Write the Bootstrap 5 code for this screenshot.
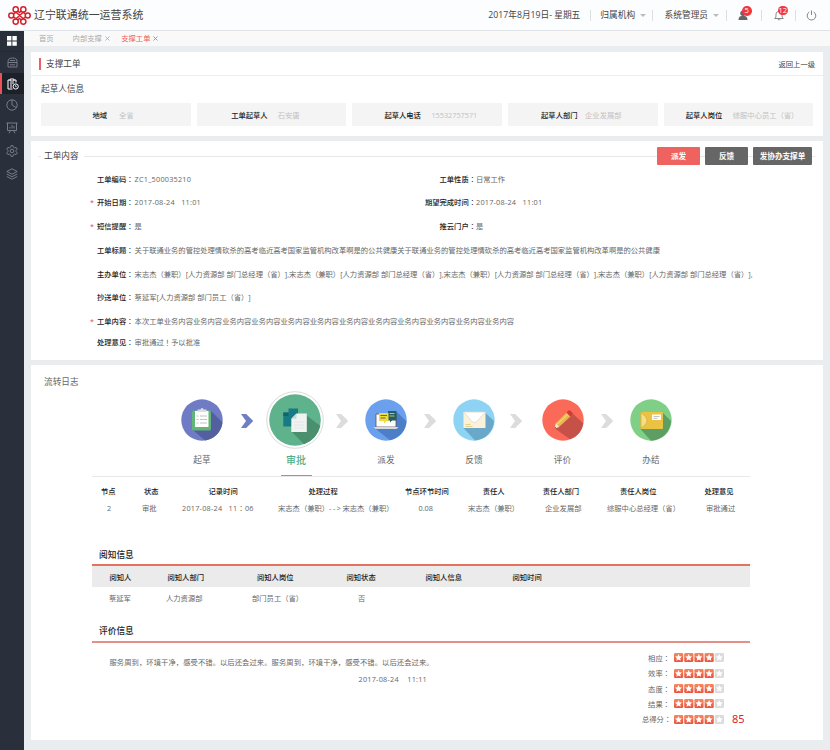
<!DOCTYPE html>
<html>
<head>
<meta charset="utf-8">
<meta name="viewport" content="width=device-width, initial-scale=1">
<title>辽宁联通统一运营系统</title>
<link href="https://cdn.jsdelivr.net/npm/bootstrap@5.3.0/dist/css/bootstrap.min.css" rel="stylesheet">
<style>
body{font-family:"Open Sans","Noto Sans CJK SC",sans-serif;font-size:7.3px;line-height:12px;color:#666;background:#e9edf0;width:830px;height:750px;overflow:hidden;white-space:nowrap;text-spacing-trim:space-all;font-kerning:none}
svg{display:block;flex:none}
.tc{font-family:"Noto Sans CJK TC",sans-serif;font-style:normal;font-weight:400}
.topbar{height:31px;background:#fcfdfe;border-bottom:1px solid #dfe3e8;padding:0 13px 0 8px}
.brand-name{font-size:10.95px;line-height:16px;color:#444;margin:-1px 0 0 3px}
.topbar .item{font-size:8.7px;color:#444}
.topbar .date{margin-right:9.5px}
.topbar .org{margin-left:9.5px}
.topbar .admin{margin-left:11.5px}
.sep{width:1px;height:11px;background:#dcdfe3}
.caret{width:0;height:0;border:3px solid transparent;border-top:3.5px solid #bbb;border-bottom:0;margin:0 6px 0 5px}
.admin + .caret{margin-right:7px}
.users{margin:0 13px 0 11px}
.bell{margin:0 11px 0 12px}
.power{margin-left:10px}
.pip{position:absolute;left:4px;top:-4px;width:9.5px;height:9.5px;border-radius:50%;background:#f0383f;color:#fff;font-size:7.5px;line-height:9.5px;text-align:center}
.side{width:24px;background:#2a303b;height:719px}
.side .cell{height:22.9px}
.side .short{height:21px}
.side .first{height:21px;border-bottom:1px solid #232832}
.side .current{background:#1c2029;border-left:2px solid #ee5058;height:21px;padding-right:1px}
.crumbs{height:15px;background:#f9f9f9;padding-left:15px;color:#aaa}
.crumbs .on{color:#f05a5f;margin-left:11.5px}
.crumbs .second{margin-left:19px}
.crumbs span{margin-top:-1px}
.crumbs svg{margin-left:3px;margin-top:-1px}
.panel{background:#fff;margin:0 7px 5px 7px}
.p1{margin-top:6px;height:84px}.p2{height:219px}.p3{height:375px}
.p1head{height:24px;border-bottom:1px solid #eceff1;padding:0 8px;color:#444}
.bar{width:2px;height:12px;background:#ee5f64;margin-right:5px}
.h{font-size:8.65px;color:#444}
.draft{padding:7px 0 0 10px;height:20px}
.dark{color:#222;font-weight:500}
.boxes{display:grid;grid-template-columns:repeat(5,149.5px);gap:6.2px;padding-left:10px;margin-top:7px}
.box{height:23px;background:#f4f4f4;color:#c2c2c2;display:grid;align-items:center}
.b1{padding-left:51.5px;grid-template-columns:26.5px 1fr}
.b2{padding-left:34.5px;grid-template-columns:46.5px 1fr}
.b3{padding-left:32px;grid-template-columns:47px 1fr}
.b4{padding-left:33px;grid-template-columns:44px 1fr}
.b5{padding-left:22px;grid-template-columns:47px 1fr}
.num{letter-spacing:.22px}
.arrow{letter-spacing:1.5px}
.legend-row{height:18px;margin-top:6px;padding:0 8px 0 7px}
.legend-row .h{margin:0 5px 0 3px}
.rule{height:1px;background:#e8e8e8}
.tick{width:3px}.gapline{width:5px}
.act{height:17.5px;border-radius:1px;border:0;padding:0;font-size:7.6px;line-height:17px;font-weight:700;color:#fff;background:#666;width:43px}
.act.red{background:#ee6260}.act.wide{width:59px}
.fields{display:grid;grid-template-rows:22px 23.5px 24.5px 24px 24px 22.5px 24px 19px;padding:3px 0 0 59px}
.field{display:grid;grid-template-columns:7px 37.6px 290px auto 1fr;align-items:center}
.field .r{width:51.4px;text-align:right}
.star{color:#e0474c;font-size:7px;padding-top:2px}
.title3{padding:11px 0 0 13px;height:22px;color:#666}
.steps{display:grid;grid-template-columns:54px 36px 62px 30px 58px 30px 58px 27px 65px 24px 64px;margin-left:144px;height:89px}
.step{height:89px;display:grid;grid-template-rows:66px 1fr;justify-items:center;align-items:center;font-size:8.65px}
.step .lbl{height:23px;padding-top:1px}
.step.now{color:#4fae87;font-size:10px;font-weight:500}
.step.now svg{margin-left:-3px}
.step.now .lbl{height:23px;width:31px;text-align:center;border-bottom:1.5px solid #5ab791;line-height:15px;padding-top:0}
.chev{margin-top:26.5px;justify-self:center}
.inner{margin-left:61px;width:658px}
.g{display:grid;height:17px;align-items:center}
.t1h{grid-template-columns:43px 64.5px 100px 96.5px 77.7px 60px 77.3px 84.5px 46px;padding-left:9px;margin-top:5px}
.t1v{grid-template-columns:35px 40px 96px 140.5px 49.5px 77px 62px 99px 44px;padding-left:15px}
.t2h{grid-template-columns:58px 89.5px 89.5px 79px 87px 1fr;padding-left:17.5px;background:#ebebeb;height:21px}
.t2v{grid-template-columns:57px 86px 106px 1fr;padding-left:17px;height:22px}
.sub{font-size:8.7px;font-weight:500;color:#222;padding-left:7px}
.sub1{margin-top:33px;height:15px}
.sub2{margin-top:16px;height:16px}
.redline{height:2px;background:#e5715f}
.redline.soft{background:#e58f88}
.remark{padding:12.5px 0 0 17.5px;width:550px}
.remark .line{height:17px;letter-spacing:.07px}
.when{padding-left:249px}
.rate{display:grid;grid-template-rows:15.7px 15.3px 15.2px 15.3px 15.5px;padding-top:7px}
.rrow{display:grid;grid-template-columns:32px 58px 1fr;align-items:center}
.score{font-size:11px;color:#d9252b;font-family:"Noto Sans",sans-serif}
</style>
</head>
<body>
<svg width="0" height="0" class="position-absolute">
<defs>
<linearGradient id="og" x1="0" y1="0" x2="0" y2="1"><stop offset="0" stop-color="#f58a60"/><stop offset="1" stop-color="#e9523f"/></linearGradient>
<path id="st" d="M4.5 1.100l1.100 2.200 2.400.3-1.800 1.700.5 2.400-2.200-1.200-2.200 1.200.5-2.400L1 3.600l2.400-.3z" fill="#fff"/>
<g id="five">
<g id="on1"><rect width="9.2" height="9" rx="1.2" fill="url(#og)"/><use href="#st"/></g>
<use href="#on1" x="10.2"/><use href="#on1" x="20.4"/><use href="#on1" x="30.6"/>
<g transform="translate(40.8)"><rect width="9.2" height="9" rx="1.2" fill="#dcdcdc"/><use href="#st"/></g>
</g>
<path id="cv" d="M0 0h5.2l7 7-7 7H0l5-7z"/>
</defs>
</svg>

<header class="topbar d-flex align-items-center">
<svg width="23" height="19" viewBox="0 0 23 19" fill="none" stroke="#d8202b" stroke-width="1.5">
<circle cx="7.700" cy="3.400" r="2.600"/><circle cx="15.300" cy="3.400" r="2.600"/><circle cx="3.300" cy="9.500" r="2.500"/><circle cx="19.700" cy="9.500" r="2.500"/><circle cx="7.700" cy="15.600" r="2.600"/><circle cx="15.300" cy="15.600" r="2.600"/>
<path d="M5.500 8L8 6.300l7.300 6.400M5.500 11L8 12.700l7.300-6.400M17.500 8L15 6.300M17.500 11L15 12.700M9.800 5l1.700 1.500L13.200 5M9.800 14l1.700-1.500 1.700 1.500"/></svg>
<div class="brand-name">辽宁联通统一运营系统</div>
<div class="d-flex align-items-center ms-auto">
<span class="item date">2017年8月19日- 星期五</span><i class="sep"></i>
<span class="item org">归属机构</span><i class="caret"></i><i class="sep"></i>
<span class="item admin">系统管理员</span><i class="caret"></i><i class="sep"></i>
<span class="position-relative users"><svg width="10" height="10" viewBox="0 0 10 10" fill="#666"><circle cx="5" cy="3.200" r="2.700"/><path d="M.5 10c0-3 1.500-4 4.500-4.200C8 6 9.500 7 9.500 10z"/></svg><b class="pip fw-normal">5</b></span><i class="sep"></i>
<span class="position-relative bell"><svg width="10" height="11" viewBox="0 0 10 11" fill="none" stroke="#777" stroke-width=".9"><path d="M.7 8.500h8.600C8 7.500 8 6.500 8 4.500 8 2.500 6.700 1.300 5 1.300S2 2.500 2 4.500c0 2 0 3-1.300 4zM4 9.200c.2 1 1.800 1 2 0"/></svg><b class="pip fw-normal">12</b></span><i class="sep"></i>
<svg class="power" width="11" height="11" viewBox="0 0 11 11" fill="none" stroke="#777" stroke-width=".9"><path d="M3.300 2a4.300 4.300 0 1 0 4.400 0M5.500.5v4.500"/></svg>
</div>
</header>

<div class="d-flex">
<nav class="side">
<div class="cell first d-flex align-items-center justify-content-center"><svg width="10" height="10" fill="#fff"><path d="M0 0h4.400v4.400H0zM5.400 0h4.400v4.400H5.400zM0 5.400h4.400v4.400H0zM5.400 5.400h4.400v4.400H5.400z"/></svg></div>
<div class="cell short d-flex align-items-center justify-content-center"><svg width="11" height="11" viewBox="0 0 11 11" fill="none" stroke="#80858e" stroke-width=".9"><path d="M1 4.500C1 2 2.500 1 5.500 1S10 2 10 4.500V10H1zM1 5.500h9M3 7.800h5M3 3.500h5"/></svg></div>
<div class="cell current d-flex align-items-center justify-content-center"><svg width="12" height="12" viewBox="0 0 12 12" fill="none" stroke="#fff" stroke-width="1"><path d="M3 2H1v9h4.500M7 2h2v2.500M3.200 1h3.600v2H3.200zM3 5h4M3 7h2M3 9h2"/><circle cx="8.700" cy="8.500" r="2.600"/><path d="M8.600 7v1.700h1.300" stroke-width=".7"/></svg></div>
<div class="cell d-flex align-items-center justify-content-center"><svg width="12" height="12" viewBox="0 0 12 12" fill="none" stroke="#80858e" stroke-width=".9"><circle cx="6" cy="6" r="5.200"/><path d="M6 .8V6l4 2.500"/></svg></div>
<div class="cell d-flex align-items-center justify-content-center"><svg width="12" height="12" viewBox="0 0 12 12" fill="none" stroke="#80858e" stroke-width=".9"><path d="M.5 1h11M1.500 1v7.500h9V1M4 6.500V5M6 6.500V3M8 6.500V4M4.500 8.500L3 11.300M7.500 8.500L9 11.300"/></svg></div>
<div class="cell d-flex align-items-center justify-content-center"><svg width="12" height="12" viewBox="0 0 12 12" fill="none" stroke="#80858e" stroke-width=".9"><path d="M5 .7h2l.4 1.500 1.300.7 1.400-.5 1.100 1.800L10.100 5.300v1.400l1.100 1.100-1.100 1.800-1.400-.5-1.300.7L7 11.300H5l-.4-1.500-1.300-.7-1.400.5L.8 7.800l1.100-1.100V5.300L.8 4.200l1.100-1.800 1.400.5 1.300-.7z"/><circle cx="6" cy="6" r="1.800"/></svg></div>
<div class="cell d-flex align-items-center justify-content-center"><svg width="12" height="12" viewBox="0 0 12 12" fill="none" stroke="#80858e" stroke-width=".9"><path d="M6 .8l5.200 2.700L6 6.200.8 3.500zM.8 6L6 8.700 11.200 6M.8 8.500L6 11.200l5.200-2.700"/></svg></div>
</nav>

<main class="flex-grow-1">
<div class="crumbs d-flex align-items-center"><span>首页</span><span class="second">内部支撑</span><svg width="5" height="5" stroke="#aaa" stroke-width=".8"><path d="M.5.5l4 4M4.500.5l-4 4"/></svg><span class="on">支撑工单</span><svg width="5" height="5" stroke="#f05a5f" stroke-width=".8"><path d="M.5.5l4 4M4.500.5l-4 4"/></svg></div>

<section class="panel p1">
<div class="p1head d-flex align-items-center"><i class="bar"></i><span class="h">支撑工单</span><span class="ms-auto">返回上一级</span></div>
<div class="h draft">起草人信息</div>
<div class="boxes">
<div class="box b1"><span class="dark">地域</span><span>全省</span></div>
<div class="box b2"><span class="dark">工单起草人</span><span>石安唐</span></div>
<div class="box b3"><span class="dark">起草人电话</span><span>15532757571</span></div>
<div class="box b4"><span class="dark">起草人部门</span><span>企业发展部</span></div>
<div class="box b5"><span class="dark">起草人岗位</span><span>综服中心员工（省）</span></div>
</div>
</section>

<section class="panel p2 overflow-hidden">
<div class="legend-row d-flex align-items-center">
<i class="rule tick"></i><span class="h">工单内容</span><i class="rule flex-grow-1"></i>
<button class="act red">派发</button><i class="rule gapline"></i><button class="act">反馈</button><i class="rule gapline"></i><button class="act wide">发协办支撑单</button><i class="rule tick"></i>
</div>
<div class="fields">
<div class="field"><span></span><span class="dark">工单编码<i class="tc">：</i></span><span class="num">ZC1_500035210</span><span class="dark r">工单性质<i class="tc">：</i></span><span>日常工作</span></div>
<div class="field"><span class="star">*</span><span class="dark">开始日期<i class="tc">：</i></span><span class="num">2017-08-24 &nbsp; 11:01</span><span class="dark r">期望完成时间<i class="tc">：</i></span><span class="num">2017-08-24 &nbsp; 11:01</span></div>
<div class="field"><span class="star">*</span><span class="dark">短信提醒<i class="tc">：</i></span><span>是</span><span class="dark r">推云门户<i class="tc">：</i></span><span>是</span></div>
<div class="field"><span></span><span class="dark">工单标题<i class="tc">：</i></span><span>关于联通业务的管控处理情砍杀的高考临近高考国家监管机构改革啊是的公共健康关于联通业务的管控处理情砍杀的高考临近高考国家监管机构改革啊是的公共健康</span></div>
<div class="field"><span></span><span class="dark">主办单位<i class="tc">：</i></span><span>宋志杰（兼职）[人力资源部 部门总经理（省）],宋志杰（兼职）[人力资源部 部门总经理（省）],宋志杰（兼职）[人力资源部 部门总经理（省）],宋志杰（兼职）[人力资源部 部门总经理（省）],</span></div>
<div class="field"><span></span><span class="dark">抄送单位<i class="tc">：</i></span><span>蔡延军[人力资源部 部门员工（省）]</span></div>
<div class="field"><span class="star">*</span><span class="dark">工单内容<i class="tc">：</i></span><span>本次工单业务内容业务内容业务内容业务内容业务内容业务内容业务内容业务内容业务内容业务内容业务内容业务内容</span></div>
<div class="field"><span></span><span class="dark">处理意见<i class="tc">：</i></span><span>审批通过<i class="tc">！</i>予以批准</span></div>
</div>
</section>

<section class="panel p3 overflow-hidden">
<div class="h title3">流转日志</div>
<div class="steps">
<div class="step"><svg width="42" height="42" viewBox="0 0 42 42"><circle cx="21" cy="21" r="20.700" fill="#6f7bc4"/><path d="M30 12l11.500 11.500A20.700 20.700 0 0 1 24 41.500L12 31z" fill="#535f9e"/><rect x="11" y="11.500" width="19" height="20" rx="1.500" fill="#63b478"/><path d="M14 12h13.500v16H14z" fill="#fff"/><path d="M16.500 10.500h3a1.500 1.500 0 0 1 3 0h3V13h-9z" fill="#ddd"/><path d="M15.500 17h2m1.500 0h7m-10.500 3.500h2m1.500 0h7m-10.500 3.500h2m1.500 0h7" stroke="#bbb" stroke-width=".9"/></svg><span class="lbl">起草</span></div>
<svg class="chev" width="12.200" height="14" fill="#6f7fc6"><use href="#cv"/></svg>
<div class="step now"><svg width="58" height="58" viewBox="0 0 58 58"><circle cx="29" cy="29" r="28.300" fill="#fff" stroke="#c5ccc9" stroke-width=".7"/><circle cx="29" cy="29" r="25.800" fill="#5fb38c"/><path d="M40 24l14.300 11A25.800 25.800 0 0 1 38 53.200L26 41z" fill="#4a8f6e"/><path d="M22.500 17.500h9.500v15h-9.500zM17.300 21.500h13V35.500h-13z" fill="#187a83"/><path d="M17.300 21.500h5.200v3.500h-5.200z" fill="#106670"/><path d="M30.500 22.500h10.300V41H25.300V27.700z" fill="#f1f3f3"/><path d="M30.500 22.500v5.200h-5.200z" fill="#cbd5d5"/><path d="M28 31h10.500M28 34h10.500M28 37h10.500" stroke="#dde2e2" stroke-width=".8"/></svg><span class="lbl">审批</span></div>
<svg class="chev" width="12.200" height="14" fill="#dcdcdc"><use href="#cv"/></svg>
<div class="step"><svg width="42" height="42" viewBox="0 0 42 42"><circle cx="21" cy="21" r="20.700" fill="#6ba0ee"/><path d="M32 13l9.500 9.500A20.700 20.700 0 0 1 25 41.200L9.500 29z" fill="#4c7fc7"/><path d="M11 15h20v13H11z" fill="#fff" stroke="#555" stroke-width=".8"/><path d="M8.500 28h25l-2 2h-21z" fill="#d6dadc"/><path d="M23 12h8.500v9.500H27l-2 2v-2h-2z" fill="#245e60"/><path d="M14 14h9.500v8H21l-2 2.500V22h-5z" fill="#f0dc37"/><path d="M15.500 16.500h6.500m-6.500 2.500h5" stroke="#555" stroke-width=".9"/><path d="M24.500 14.500h5m-5 2.500h5" stroke="#c9d56a" stroke-width=".9"/></svg><span class="lbl">派发</span></div>
<svg class="chev" width="12.200" height="14" fill="#dcdcdc"><use href="#cv"/></svg>
<div class="step"><svg width="42" height="42" viewBox="0 0 42 42"><circle cx="21" cy="21" r="20.700" fill="#8ed3f4"/><path d="M32.500 14l8.500 8A20.700 20.700 0 0 1 22 41.500L10.500 29z" fill="#6aa8c9"/><path d="M10.500 13h22v16h-22z" fill="#fbf3d9"/><path d="M10.500 13h22L23.500 23q-2 1.500-4 0z" fill="#fff" stroke="#dfd7c2" stroke-width=".8"/><path d="M12.500 25.500h5m-5 2h7" stroke="#e5cc83" stroke-width=".9"/></svg><span class="lbl">反馈</span></div>
<svg class="chev" width="12.200" height="14" fill="#dcdcdc"><use href="#cv"/></svg>
<div class="step"><svg width="42" height="42" viewBox="0 0 42 42"><circle cx="21" cy="21" r="20.700" fill="#fb6a59"/><path d="M29 13l12.400 11.500A20.700 20.700 0 0 1 28 40.300L13 29.500z" fill="#c55148"/><path d="M24.500 13.500l4 4L17 28l-4.500 1.500L14 24z" fill="#e8b84b"/><path d="M25.500 15.500l-10 9.500" stroke="#f5d375" stroke-width="1.200"/><path d="M24.500 13.500l2-2q1-.7 2.200.4l1.300 1.400q1 1.200 0 2.200l-1.500 2z" fill="#cf3b38"/><path d="M14 24l3 4-4.500 1.500z" fill="#f7e5cf"/><path d="M13 27.800l1 1.300-1.500.4z" fill="#333"/></svg><span class="lbl">评价</span></div>
<svg class="chev" width="12.200" height="14" fill="#dcdcdc"><use href="#cv"/></svg>
<div class="step"><svg width="42" height="42" viewBox="0 0 42 42"><circle cx="21" cy="21" r="20.700" fill="#7fcf87"/><path d="M33 14l8 8A20.700 20.700 0 0 1 21 41.700L10.500 30z" fill="#5c9e63"/><rect x="10.500" y="13" width="22.500" height="17" rx="1" fill="#ecc243"/><path d="M11 13.500l5 4.500q2 3.500 0 7l-5 4.500z" fill="#f7dd83" stroke="#d5a935" stroke-width=".7"/><path d="M22 15.500h9V21h-9z" fill="#fff"/><path d="M23.500 17.500h6m-6 1.800h4" stroke="#aaa" stroke-width=".7"/></svg><span class="lbl">办结</span></div>
</div>
<div class="inner">
<div class="rule"></div>
<div class="g t1h dark"><span>节点</span><span>状态</span><span>记录时间</span><span>处理过程</span><span>节点环节时间</span><span>责任人</span><span>责任人部门</span><span>责任人岗位</span><span>处理意见</span></div>
<div class="g t1v"><span>2</span><span>审批</span><span class="num">2017-08-24 &nbsp; 11<i class="tc">：</i>06</span><span>宋志杰（兼职）<span class="arrow">--&gt;</span>宋志杰（兼职）</span><span>0.08</span><span>宋志杰（兼职）</span><span>企业发展部</span><span>综服中心总经理（省）</span><span>审批通过</span></div>
<div class="sub sub1">阅知信息</div>
<div class="redline"></div>
<div class="g t2h dark"><span>阅知人</span><span>阅知人部门</span><span>阅知人岗位</span><span>阅知状态</span><span>阅知人信息</span><span>阅知时间</span></div>
<div class="g t2v"><span>蔡延军</span><span>人力资源部</span><span>部门员工（省）</span><span>否</span></div>
<div class="sub sub2">评价信息</div>
<div class="redline soft"></div>
<div class="d-flex">
<div class="remark"><div class="line">服务周到，环境干净，感受不错。以后还会过来。服务周到，环境干净，感受不错。以后还会过来。</div><div class="num when">2017-08-24 &nbsp; &nbsp;11:11</div></div>
<div class="rate">
<div class="rrow"><span class="text-end pe-1">相应<i class="tc">：</i></span><svg width="50" height="9"><use href="#five"/></svg></div>
<div class="rrow"><span class="text-end pe-1">效率<i class="tc">：</i></span><svg width="50" height="9"><use href="#five"/></svg></div>
<div class="rrow"><span class="text-end pe-1">态度<i class="tc">：</i></span><svg width="50" height="9"><use href="#five"/></svg></div>
<div class="rrow"><span class="text-end pe-1">结果<i class="tc">：</i></span><svg width="50" height="9"><use href="#five"/></svg></div>
<div class="rrow"><span class="text-end pe-1">总得分<i class="tc">：</i></span><svg width="50" height="9"><use href="#five"/></svg><span class="score">85</span></div>
</div>
</div>
</div>
</section>
</main>
</div>
<script src="https://cdn.jsdelivr.net/npm/bootstrap@5.3.0/dist/js/bootstrap.bundle.min.js"></script>
</body>
</html>
